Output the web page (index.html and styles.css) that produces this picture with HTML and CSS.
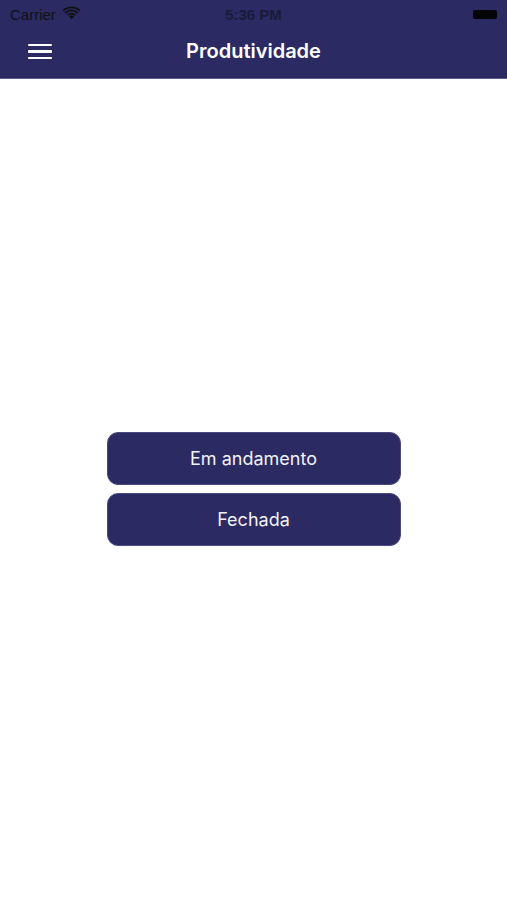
FILE: index.html
```html
<!DOCTYPE html>
<html>
    <head>
        <link rel="stylesheet" href="styles.css">
    </head>
    <body>
        <div class="header">
            <div class="status">
                <div class="carrier">
                    Carrier
                    <svg class="wifi" width="19" height="14" viewBox="0 0 18 13">
                        <path d="M9 12.5 L6.6 9.9 A3.4 3.4 0 0 1 11.4 9.9 Z" fill="#111"/>
                        <path d="M4.7 8 A6.1 6.1 0 0 1 13.3 8 L12.1 9.2 A4.4 4.4 0 0 0 5.9 9.2 Z" fill="#111"/>
                        <path d="M2.6 5.9 A9 9 0 0 1 15.4 5.9 L14.2 7.1 A7.3 7.3 0 0 0 3.8 7.1 Z" fill="#111"/>
                        <path d="M0.5 3.8 A12 12 0 0 1 17.5 3.8 L16.3 5 A10.3 10.3 0 0 0 1.7 5 Z" fill="#111"/>
                    </svg>
                </div>
                <div class="time">5:36 PM</div>
                <div class="battery"></div>
            </div>
            <div class="navbar">
                <div class="menu">
                    <span></span>
                    <span></span>
                    <span></span>
                </div>
                <div class="title">Produtividade</div>
            </div>
        </div>
        <div class="content">
            <button class="option">Em andamento</button>
            <button class="option">Fechada</button>
        </div>
    </body>
</html>
```

FILE: styles.css
```css
*{
    box-sizing: border-box;
    margin: 0px;
}
body{
    background-color: white;
    font-family: Inter, "Noto Sans", sans-serif;
    width: 507px;
    height: 900px;
}
.header{
    background-color: #2b2a63;
    height: 79px;
    border-bottom: 1px solid #5e5d92;
}
.status{
    height: 28px;
    display: flex;
    align-items: center;
    justify-content: space-between;
    padding: 0 10px;
    color: #111;
    font-family: "Liberation Sans", Arial, sans-serif;
    font-size: 15px;
}
.carrier{
    display: flex;
    align-items: center;
    gap: 6px;
    width: 110px;
}
.wifi{
    margin-top: -3px;
}
.time{
    font-weight: bold;
    font-size: 15px;
    color: #1a1a3a;
}
.battery{
    width: 24px;
    height: 9px;
    background-color: #050505;
    border-radius: 2px;
    margin-left: 86px;
}
.navbar{
    height: 50px;
    display: flex;
    align-items: center;
    position: relative;
    padding-left: 28px;
}
.menu{
    display: flex;
    flex-direction: column;
    gap: 4px;
    margin-top: -3px;
}
.menu span{
    display: block;
    width: 24px;
    height: 2.5px;
    background-color: white;
    border-radius: 1px;
}
.title{
    position: absolute;
    left: 0;
    right: 0;
    top: 11px;
    text-align: center;
    color: white;
    font-size: 20px;
    font-weight: 600;
    pointer-events: none;
}
.content{
    display: flex;
    flex-direction: column;
    align-items: center;
    gap: 8px;
    padding-top: 353px;
}
.option{
    width: 294px;
    height: 53px;
    background-color: #2b2a63;
    border: 1px solid #4a4980;
    border-radius: 11px;
    color: #f2f2f7;
    font-family: Inter, "Noto Sans", sans-serif;
    font-size: 18px;
    cursor: pointer;
}
```
